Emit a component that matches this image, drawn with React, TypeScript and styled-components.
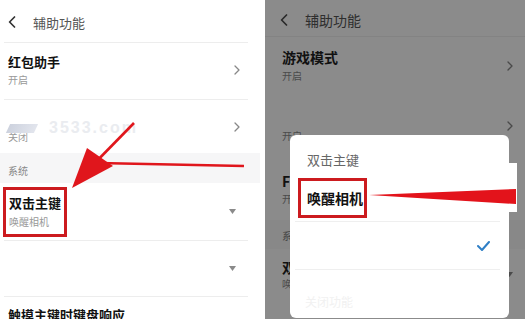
import React from 'react';
import styled, { createGlobalStyle } from 'styled-components';

const Global = createGlobalStyle`
  html, body { margin: 0; padding: 0; background: #fff; }
  body { font-family: "Noto Sans CJK SC", "Noto Sans", sans-serif; }
`;

const Screen = styled.div`
  position: relative;
  width: 525px;
  height: 319px;
  overflow: hidden;
  display: flex;
`;

const LeftPanel = styled.div`
  position: relative;
  width: 265px;
  flex: none;
  background: #fff;
  display: flex;
  flex-direction: column;
`;

const RightPanel = styled.div`
  position: relative;
  flex: 1;
  background: #8b8b8b;
  display: flex;
  flex-direction: column;
`;

const Header = styled.div<{ $dim?: boolean }>`
  height: ${p => (p.$dim ? 36 : 42)}px;
  box-sizing: border-box;
  padding: ${p => (p.$dim ? '4px 0 0 15px' : '2px 0 0 8px')};
  display: flex;
  align-items: center;
  gap: 17px;
  font-size: ${p => (p.$dim ? 14 : 13)}px;
  color: ${p => (p.$dim ? '#2e2e2e' : '#555')};
  flex: none;
`;

const Divider = styled.div<{ $dim?: boolean }>`
  height: 1px;
  flex: none;
  background: ${p => (p.$dim ? '#838383' : '#ededed')};
  margin: ${p => (p.$dim ? '0' : '0 17px 0 4px')};
`;

const Row = styled.div<{ $pad: string; $h?: number }>`
  display: flex;
  align-items: center;
  justify-content: space-between;
  padding: ${p => p.$pad};
  ${p => (p.$h ? `height: ${p.$h}px; box-sizing: border-box;` : '')}
  flex: none;
`;

const TextBlock = styled.div`
  display: flex;
  flex-direction: column;
`;

const Title = styled.div<{ $dim?: boolean }>`
  font-size: ${p => (p.$dim ? 14 : 13)}px;
  line-height: 18px;
  font-weight: 700;
  color: #111;
  white-space: nowrap;
  min-height: 18px;
`;

const Sub = styled.div<{ $dim?: boolean; $mt: number }>`
  font-size: 10px;
  line-height: 14px;
  margin-top: ${p => p.$mt}px;
  color: ${p => (p.$dim ? '#4a4a4a' : '#999')};
  white-space: nowrap;
`;

const Section = styled.div<{ $dim?: boolean }>`
  height: ${p => (p.$dim ? 29 : 30)}px;
  box-sizing: border-box;
  padding: ${p => (p.$dim ? '9px 0 0 17px' : '11px 0 0 8px')};
  margin-right: ${p => (p.$dim ? 0 : 5)}px;
  background: ${p => (p.$dim ? '#888' : '#f6f6f7')};
  font-size: 10px;
  line-height: 14px;
  color: ${p => (p.$dim ? '#454545' : '#888')};
  flex: none;
`;

const MarkBox = styled.div`
  border: 3px solid #cc1b1f;
  padding: 4px 3px 5px 3px;
  margin: 4px 0 3px 3px;
`;

const Watermark = styled.div`
  position: absolute;
  left: 8px;
  top: 119px;
  display: flex;
  align-items: center;
  gap: 13px;
  pointer-events: none;
`;

const WaterShape = styled.div`
  width: 28px;
  height: 9px;
  background: linear-gradient(90deg, #cdd2de, #e2e5ed);
  transform: skewX(-25deg);
`;

const WaterText = styled.div`
  font-family: "Liberation Sans", Arial, sans-serif;
  font-weight: 700;
  font-size: 16px;
  letter-spacing: 2px;
  color: #eaecf0;
`;

const Popup = styled.div`
  position: absolute;
  left: 25px;
  top: 135px;
  width: 219px;
  height: 183px;
  background: #fff;
  border-radius: 6px;
  display: flex;
  flex-direction: column;
`;

const PopupTitle = styled.div`
  padding: 16px 0 0 17px;
  font-size: 13px;
  line-height: 18px;
  color: #666;
`;

const OptionRow = styled.div<{ $h: number }>`
  height: ${p => p.$h}px;
  display: flex;
  align-items: center;
  justify-content: space-between;
  padding: 0 19px 0 8px;
  flex: none;
`;

const PopupMark = styled.div`
  border: 3px solid #cc1b1f;
  padding: 7px 1px 7px 6px;
  font-size: 14px;
  line-height: 20px;
  font-weight: 700;
  color: #111;
  margin-top: 6px;
`;

const PopupDivider = styled.div`
  height: 1px;
  background: #efefef;
  margin: 0 9px 0 5px;
  flex: none;
`;

const FaintText = styled.div`
  padding: 25px 0 0 15px;
  font-size: 12px;
  line-height: 14px;
  color: #f1f1f1;
`;

const Overlay = styled.svg`
  position: absolute;
  left: 0;
  top: 0;
  pointer-events: none;
`;

const Back = ({ color }: { color: string }) => (
  <svg width="8" height="12" viewBox="0 0 8 12">
    <path d="M6.5 1 L1.6 6 L6.5 11" fill="none" stroke={color} strokeWidth="1.7" strokeLinecap="round" strokeLinejoin="round" />
  </svg>
);

const Chevron = ({ color }: { color: string }) => (
  <svg width="6" height="10" viewBox="0 0 6 10">
    <path d="M1 1 L5 5 L1 9" fill="none" stroke={color} strokeWidth="1.3" strokeLinecap="round" strokeLinejoin="round" />
  </svg>
);

const Caret = ({ color }: { color: string }) => (
  <svg width="7" height="5" viewBox="0 0 7 5">
    <polygon points="0,0 7,0 3.5,5" fill={color} />
  </svg>
);

const Check = () => (
  <svg width="13" height="10" viewBox="0 0 13 10">
    <polyline points="1,5 5,9 12,1" fill="none" stroke="#2f7fc6" strokeWidth="2" strokeLinecap="round" strokeLinejoin="round" />
  </svg>
);

export default function App() {
  return (
    <>
      <Global />
      <Screen>
        <LeftPanel>
          <Header>
            <Back color="#333" />
            <span>辅助功能</span>
          </Header>
          <Divider />
          <Row $pad="10px 25px 12px 8px">
            <TextBlock>
              <Title>红包助手</Title>
              <Sub $mt={2}>开启</Sub>
            </TextBlock>
            <Chevron color="#888" />
          </Row>
          <Divider />
          <Row $pad="10px 25px 9px 8px">
            <TextBlock>
              <Title />
              <Sub $mt={2}>关闭</Sub>
            </TextBlock>
            <Chevron color="#888" />
          </Row>
          <Section>系统</Section>
          <Row $pad="0 29px 0 0">
            <MarkBox>
              <Title>双击主键</Title>
              <Sub $mt={3}>唤醒相机</Sub>
            </MarkBox>
            <Caret color="#8a8a8a" />
          </Row>
          <Divider />
          <Row $pad="0 29px 0 8px" $h={55}>
            <span />
            <Caret color="#8a8a8a" />
          </Row>
          <Divider />
          <Row $pad="9px 25px 0 8px">
            <Title>触摸主键时键盘响应</Title>
          </Row>
          <Watermark>
            <WaterShape />
            <WaterText>3533.com</WaterText>
          </Watermark>
        </LeftPanel>

        <RightPanel>
          <Header $dim>
            <Back color="#2a2a2a" />
            <span>辅助功能</span>
          </Header>
          <Divider $dim />
          <Row $pad="11px 12px 12px 17px">
            <TextBlock>
              <Title $dim>游戏模式</Title>
              <Sub $dim $mt={3}>开启</Sub>
            </TextBlock>
            <Chevron color="#4a4a4a" />
          </Row>
          <Row $pad="14px 12px 14px 17px">
            <TextBlock>
              <Title $dim />
              <Sub $dim $mt={2}>开启</Sub>
            </TextBlock>
            <Chevron color="#4a4a4a" />
          </Row>
          <Row $pad="15px 12px 14px 17px">
            <TextBlock>
              <Title $dim>FPS显示</Title>
              <Sub $dim $mt={2}>开启</Sub>
            </TextBlock>
            <Chevron color="#4a4a4a" />
          </Row>
          <Section $dim>系统</Section>
          <Row $pad="9px 12px 13px 17px">
            <TextBlock>
              <Title $dim>双击主键</Title>
              <Sub $dim $mt={1}>唤醒相机</Sub>
            </TextBlock>
            <Caret color="#4a4a4a" />
          </Row>

          <Popup>
            <PopupTitle>双击主键</PopupTitle>
            <OptionRow $h={52}>
              <PopupMark>唤醒相机</PopupMark>
            </OptionRow>
            <PopupDivider />
            <OptionRow $h={47}>
              <span />
              <Check />
            </OptionRow>
            <PopupDivider />
            <FaintText>关闭功能</FaintText>
          </Popup>
        </RightPanel>

        <Overlay width="525" height="319" viewBox="0 0 525 319">
          <line x1="134" y1="123" x2="88" y2="170" stroke="#e0161c" strokeWidth="2.6" />
          <polyline points="98,163 244,166" fill="none" stroke="#e0161c" strokeWidth="2.6" />
          <polygon points="72,188 87,148 113,166" fill="#e0161c" />
          <rect x="509" y="163" width="8" height="49" fill="#fff" />
          <polygon points="369,195 516,189 516,204" fill="#e3131b" />
        </Overlay>
      </Screen>
    </>
  );
}
